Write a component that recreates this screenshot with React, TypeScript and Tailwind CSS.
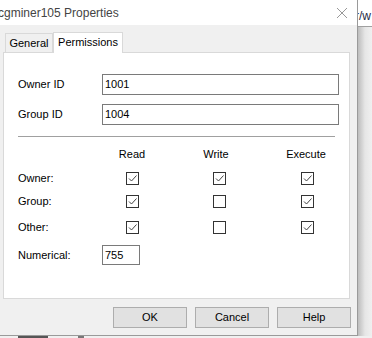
import React from "react";

const font = { fontFamily: '"Liberation Sans", Arial, sans-serif' };

function Check({ on }: { on: boolean }) {
  return (
    <div className="w-[13px] h-[13px] border border-[#333] bg-white flex items-center justify-center shrink-0">
      {on && (
        <svg width="11" height="11" viewBox="0 0 11 11">
          <path d="M2 5.5 L4.5 8 L9.5 2.5" fill="none" stroke="#444" strokeWidth="1" />
        </svg>
      )}
    </div>
  );
}

const rows = [
  { name: "Owner:", v: [true, true, true], mt: "mt-[11px]" },
  { name: "Group:", v: [true, false, true], mt: "mt-[10px]" },
  { name: "Other:", v: [true, false, true], mt: "mt-[13px]" },
];

export default function App() {
  return (
    <div className="w-[372px] h-[338px] overflow-hidden bg-[#f0f0f0] text-[11px] text-black" style={font}>
      <div className="flex h-[336px]">
        {/* dialog */}
        <div className="w-[358px] h-full flex flex-col bg-[#f0f0f0] border-r border-b border-[#9a9a9a]">
          <div className="h-[25px] bg-white flex items-center justify-between shrink-0">
            <span className="-ml-[2px] text-[12px] text-[#444]">cgminer105 Properties</span>
            <svg width="12" height="12" viewBox="0 0 12 12" className="mr-[9px]">
              <path d="M1 1 L11 11 M11 1 L1 11" stroke="#999" strokeWidth="1" />
            </svg>
          </div>

          <div className="pl-[3px] pr-[8px] pt-[6px]">
            <div className="flex items-end h-[21px] pl-[2px]">
              <div className="h-[19px] w-[48px] border border-b-0 border-[#d9d9d9] bg-[#f0f0f0] flex items-center justify-center">
                General
              </div>
              <div className="h-[21px] w-[70px] -mb-px relative z-10 border border-b-0 border-[#d9d9d9] bg-white flex items-center justify-center pb-[2px]">
                Permissions
              </div>
            </div>
            <div className="h-[247px] w-[347px] border border-[#d9d9d9] bg-white pl-[14px]">
              <div className="flex items-center mt-[21px]">
                <span className="w-[84px]">Owner ID</span>
                <div className="w-[237px] h-[21px] border border-[#7a7a7a] flex items-center px-[2px]">1001</div>
              </div>
              <div className="flex items-center mt-[9px]">
                <span className="w-[84px]">Group ID</span>
                <div className="w-[237px] h-[21px] border border-[#7a7a7a] flex items-center px-[2px]">1004</div>
              </div>
              <div className="mt-[11px] w-[317px] h-px bg-[#a0a0a0]" />
              <div className="flex mt-[10px] h-[14px] items-center">
                <span className="w-[84px]" />
                <span className="w-[60px] text-center">Read</span>
                <span className="w-[108px] text-center">Write</span>
                <span className="w-[72px] text-center">Execute</span>
              </div>
              {rows.map((r) => (
                <div key={r.name} className={`flex items-center h-[13px] ${r.mt}`}>
                  <span className="w-[108px]">{r.name}</span>
                  <Check on={r.v[0]} />
                  <div className="ml-[74px]">
                    <Check on={r.v[1]} />
                  </div>
                  <div className="ml-[75px]">
                    <Check on={r.v[2]} />
                  </div>
                </div>
              ))}
              <div className="flex items-center mt-[11px]">
                <span className="w-[84px]">Numerical:</span>
                <div className="w-[38px] h-[20px] border border-[#7a7a7a] flex items-center px-[2px]">755</div>
              </div>
            </div>
          </div>

          <div className="flex justify-end gap-[8px] pr-[6px] mt-[8px]">
            {["OK", "Cancel", "Help"].map((b) => (
              <div key={b} className="w-[74px] h-[21px] border border-[#adadad] bg-[#e1e1e1] flex items-center justify-center">
                {b}
              </div>
            ))}
          </div>
        </div>

        {/* background window to the right */}
        <div className="flex-1 flex flex-col overflow-hidden">
          <div className="h-[27px] bg-white border-b border-[#a0a0a0] text-[12px] text-[#1f2a44] pt-[7px] -ml-[3px] whitespace-nowrap">
            r/w
          </div>
          <div className="flex-1 bg-gradient-to-r from-[#bdbdbd] via-[#e6e6e6] to-[#f0f0f0]" />
        </div>
      </div>
      <div className="h-[2px] flex gap-[30px] pl-[18px] bg-[#f0f0f0]">
        <div className="w-[30px] bg-[#555]" />
        <div className="w-[6px] bg-[#777]" />
      </div>
    </div>
  );
}
